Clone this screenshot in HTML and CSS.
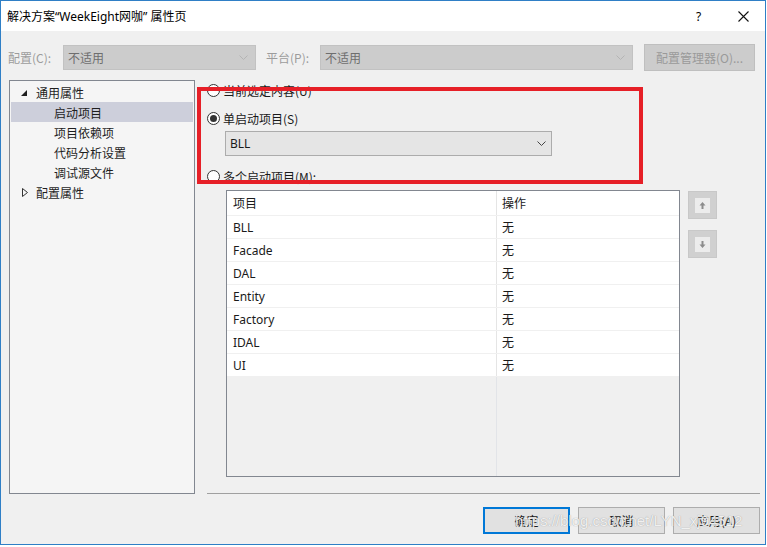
FILE: index.html
```html
<!DOCTYPE html>
<html lang="zh-CN">
<head>
<meta charset="utf-8">
<title>属性页</title>
<link rel="stylesheet" href="styles.css">
</head>
<body>
<div class="window">
  <div class="titlebar">
    <span class="title">解决方案“WeekEight网咖” 属性页</span>
    <span class="help">?</span>
    <svg class="close" width="11" height="11" viewBox="0 0 11 11"><path d="M0.5 0.5 L10.5 10.5 M10.5 0.5 L0.5 10.5" stroke="#111" stroke-width="1.1" fill="none"/></svg>
  </div>

  <div class="toolbar">
    <span class="tlabel l1">配置(C):</span>
    <div class="dcombo c1"><span>不适用</span><svg class="chev" width="9" height="5" viewBox="0 0 9 5"><path d="M0.5 0.5 L4.5 4.5 L8.5 0.5" stroke="#b4b4b4" fill="none"/></svg></div>
    <span class="tlabel l2">平台(P):</span>
    <div class="dcombo c2"><span>不适用</span><svg class="chev" width="9" height="5" viewBox="0 0 9 5"><path d="M0.5 0.5 L4.5 4.5 L8.5 0.5" stroke="#b4b4b4" fill="none"/></svg></div>
    <div class="dbutton">配置管理器(O)...</div>
  </div>

  <div class="main">
    <div class="tree">
      <div class="trow top"><svg class="exp" width="6" height="6" viewBox="0 0 6 6"><path d="M6 0 L6 6 L0 6 Z" fill="#1e1e1e"/></svg><span>通用属性</span></div>
      <div class="trow child sel"><span>启动项目</span></div>
      <div class="trow child"><span>项目依赖项</span></div>
      <div class="trow child"><span>代码分析设置</span></div>
      <div class="trow child"><span>调试源文件</span></div>
      <div class="trow top"><svg class="col" width="6" height="9" viewBox="0 0 6 9"><path d="M0.5 0.5 L5.5 4.5 L0.5 8.5 Z" fill="none" stroke="#333" stroke-width="1"/></svg><span>配置属性</span></div>
    </div>

    <div class="right">
      <div class="radio r1"><span class="rb"></span><span>当前选定内容(U)</span></div>
      <div class="radio r2"><span class="rb on"></span><span>单启动项目(S)</span></div>
      <div class="combo"><span>BLL</span><svg class="chev" width="9" height="5" viewBox="0 0 9 5"><path d="M0.5 0.5 L4.5 4.5 L8.5 0.5" stroke="#444" fill="none"/></svg></div>
      <div class="radio r3"><span class="rb"></span><span>多个启动项目(M):</span></div>

      <div class="tablearea">
        <div class="grid">
          <div class="grow head"><div class="c a">项目</div><div class="c b">操作</div></div>
          <div class="grow"><div class="c a">BLL</div><div class="c b">无</div></div>
          <div class="grow"><div class="c a">Facade</div><div class="c b">无</div></div>
          <div class="grow"><div class="c a">DAL</div><div class="c b">无</div></div>
          <div class="grow"><div class="c a">Entity</div><div class="c b">无</div></div>
          <div class="grow"><div class="c a">Factory</div><div class="c b">无</div></div>
          <div class="grow"><div class="c a">IDAL</div><div class="c b">无</div></div>
          <div class="grow"><div class="c a">UI</div><div class="c b">无</div></div>
          <div class="gfill"><div class="c a"></div><div class="c b"></div></div>
        </div>
        <div class="moves">
          <div class="mbtn"><svg width="15" height="15" viewBox="0 0 15 15"><rect x="0" y="0" width="15" height="15" fill="#ececec"/><path d="M7.5 4 L10.5 7.5 L8.5 7.5 L8.5 11 L6.5 11 L6.5 7.5 L4.5 7.5 Z" fill="#8c8c8c"/></svg></div>
          <div class="mbtn"><svg width="15" height="15" viewBox="0 0 15 15"><rect x="0" y="0" width="15" height="15" fill="#ececec"/><path d="M7.5 11 L10.5 7.5 L8.5 7.5 L8.5 4 L6.5 4 L6.5 7.5 L4.5 7.5 Z" fill="#8c8c8c"/></svg></div>
        </div>
      </div>
      <div class="sep"></div>
      <div class="mark"></div>
    </div>
  </div>

  <div class="footer">
    <div class="btn def">确定</div>
    <div class="btn">取消</div>
    <div class="btn">应用(A)</div>
    <div class="watermark">https://blog.csdn.net/LYN_xj94512</div>
  </div>
</div>
</body>
</html>
```

FILE: styles.css
```css
* { box-sizing: border-box; }
html, body { margin: 0; padding: 0; background: #ffffff; }
body {
  font-family: "Noto Sans", "Noto Sans CJK SC", sans-serif;
  font-size: 12px;
  color: #1a1a1a;
}
.window {
  width: 766px;
  height: 545px;
  border: 1px solid #2f7fc6;
  background: #f0f0f0;
  display: flex;
  flex-direction: column;
  position: relative;
}
.titlebar {
  height: 30px;
  background: #ffffff;
  display: flex;
  align-items: center;
  padding-left: 6px;
  font-family: "Noto Sans", "Noto Sans CJK SC", sans-serif;
  font-size: 12px;
  color: #000;
}
.title { flex: 1; letter-spacing: 0; }
.help { width: 8px; margin-right: 34px; font-size: 12px; }
.close { margin-right: 16px; }

.toolbar {
  margin-top: 13px;
  height: 27px;
  display: flex;
  align-items: center;
  padding-left: 7px;
  font-family: "Noto Sans CJK SC", sans-serif;
}
.tlabel { color: #9c9c9c; }
.l1 { width: 55px; }
.l2 { width: 54px; margin-left: 10px; }
.dcombo {
  height: 25px;
  background: #cccccc;
  border: 1px solid #c2c2c2;
  display: flex;
  align-items: center;
  padding-left: 4px;
  padding-right: 7px;
  color: #6e6e6e;
}
.dcombo span { flex: 1; }
.c1 { width: 193px; }
.c2 { width: 313px; }
.dbutton {
  margin-left: 11px;
  width: 111px;
  height: 27px;
  background: #cccccc;
  border: 1px solid #bfbfbf;
  color: #9a9a9a;
  display: flex;
  align-items: center;
  justify-content: center;
}

.main {
  margin-top: 9px;
  display: flex;
  height: 415px;
}
.tree {
  margin-left: 8px;
  width: 186px;
  height: 414px;
  border: 1px solid #828790;
  background: #f5f5f5;
  padding-top: 1px;
  padding-left: 1px;
  padding-right: 1px;
  font-family: "Noto Sans CJK SC", sans-serif;
}
.trow {
  height: 20px;
  display: flex;
  align-items: center;
  color: #1e1e1e;
}
.trow.top { padding-left: 10px; }
.trow.top svg { width: 6px; margin-right: 9px; }
.trow.top .exp { margin-top: 1px; }
.trow.top .col { margin-left: 1px; margin-right: 8px; }
.trow.child { padding-left: 43px; }
.trow.sel { background: #cdcfdb; }

.right {
  flex: 1;
  padding-left: 12px;
  position: relative;
  display: flex;
  flex-direction: column;
  font-family: "Noto Sans CJK SC", sans-serif;
}
.radio {
  height: 18px;
  display: flex;
  align-items: center;
  color: #1a1a1a;
}
.r1 { margin-top: 1px; }
.r2 { margin-top: 10px; }
.r3 { margin-top: 11px; }
.rb {
  width: 13px;
  height: 13px;
  border: 1px solid #333333;
  border-radius: 50%;
  background: #ffffff;
  margin-right: 3px;
  display: flex;
  align-items: center;
  justify-content: center;
}
.rb.on::after {
  content: "";
  width: 7px;
  height: 7px;
  border-radius: 50%;
  background: #333333;
}
.combo {
  margin-top: 4px;
  margin-left: 18px;
  width: 327px;
  height: 25px;
  background: #e5e5e5;
  border: 1px solid #acacac;
  display: flex;
  align-items: center;
  padding-left: 4px;
  padding-right: 5px;
  font-family: "Noto Sans", sans-serif;
}
.combo span { flex: 1; }

.tablearea {
  margin-top: 5px;
  margin-left: 19px;
  display: flex;
  align-items: flex-start;
}
.grid {
  width: 454px;
  height: 287px;
  border: 1px solid #828790;
  background: #f0f0f0;
  display: flex;
  flex-direction: column;
  font-family: "Noto Sans", "Noto Sans CJK SC", sans-serif;
}
.grow {
  display: flex;
  height: 23px;
  background: #ffffff;
  border-bottom: 1px solid #f0f0f0;
}
.grow.head { height: 25px; }
.c { display: flex; align-items: center; }
.c.a { width: 270px; padding-left: 6px; border-right: 1px solid #e5e5e5; }
.c.b { flex: 1; padding-left: 5px; }
.gfill { flex: 1; display: flex; }
.gfill .c.a { border-right: 1px solid #e2e4e8; }

.moves {
  margin-left: 8px;
  margin-top: 1px;
  display: flex;
  flex-direction: column;
  gap: 11px;
}
.mbtn {
  width: 29px;
  height: 28px;
  background: #d0d0d0;
  border: 1px solid #c8c8c8;
  display: flex;
  align-items: center;
  justify-content: center;
}

.sep {
  margin-top: 16px;
  margin-right: 5px;
  height: 1px;
  background: #a0a0a0;
}
.mark {
  position: absolute;
  left: 2px;
  top: 7px;
  width: 446px;
  height: 97px;
  border: 4px solid #e61f27;
}

.footer {
  margin-top: 12px;
  display: flex;
  justify-content: flex-end;
  padding-right: 5px;
  position: relative;
  font-family: "Noto Sans CJK SC", sans-serif;
}
.btn {
  width: 87px;
  height: 27px;
  background: #e1e1e1;
  border: 1px solid #adadad;
  display: flex;
  align-items: center;
  justify-content: center;
  margin-left: 8px;
  color: #1a1a1a;
}
.btn.def { border: 2px solid #0078d7; }
.watermark {
  position: absolute;
  left: 514px;
  top: 5px;
  font-family: "Liberation Sans", sans-serif;
  font-size: 15px;
  color: rgba(255, 255, 255, 0.85);
  text-shadow: 0 0 1px rgba(90, 90, 90, 0.6);
  white-space: nowrap;
  pointer-events: none;
}
```
